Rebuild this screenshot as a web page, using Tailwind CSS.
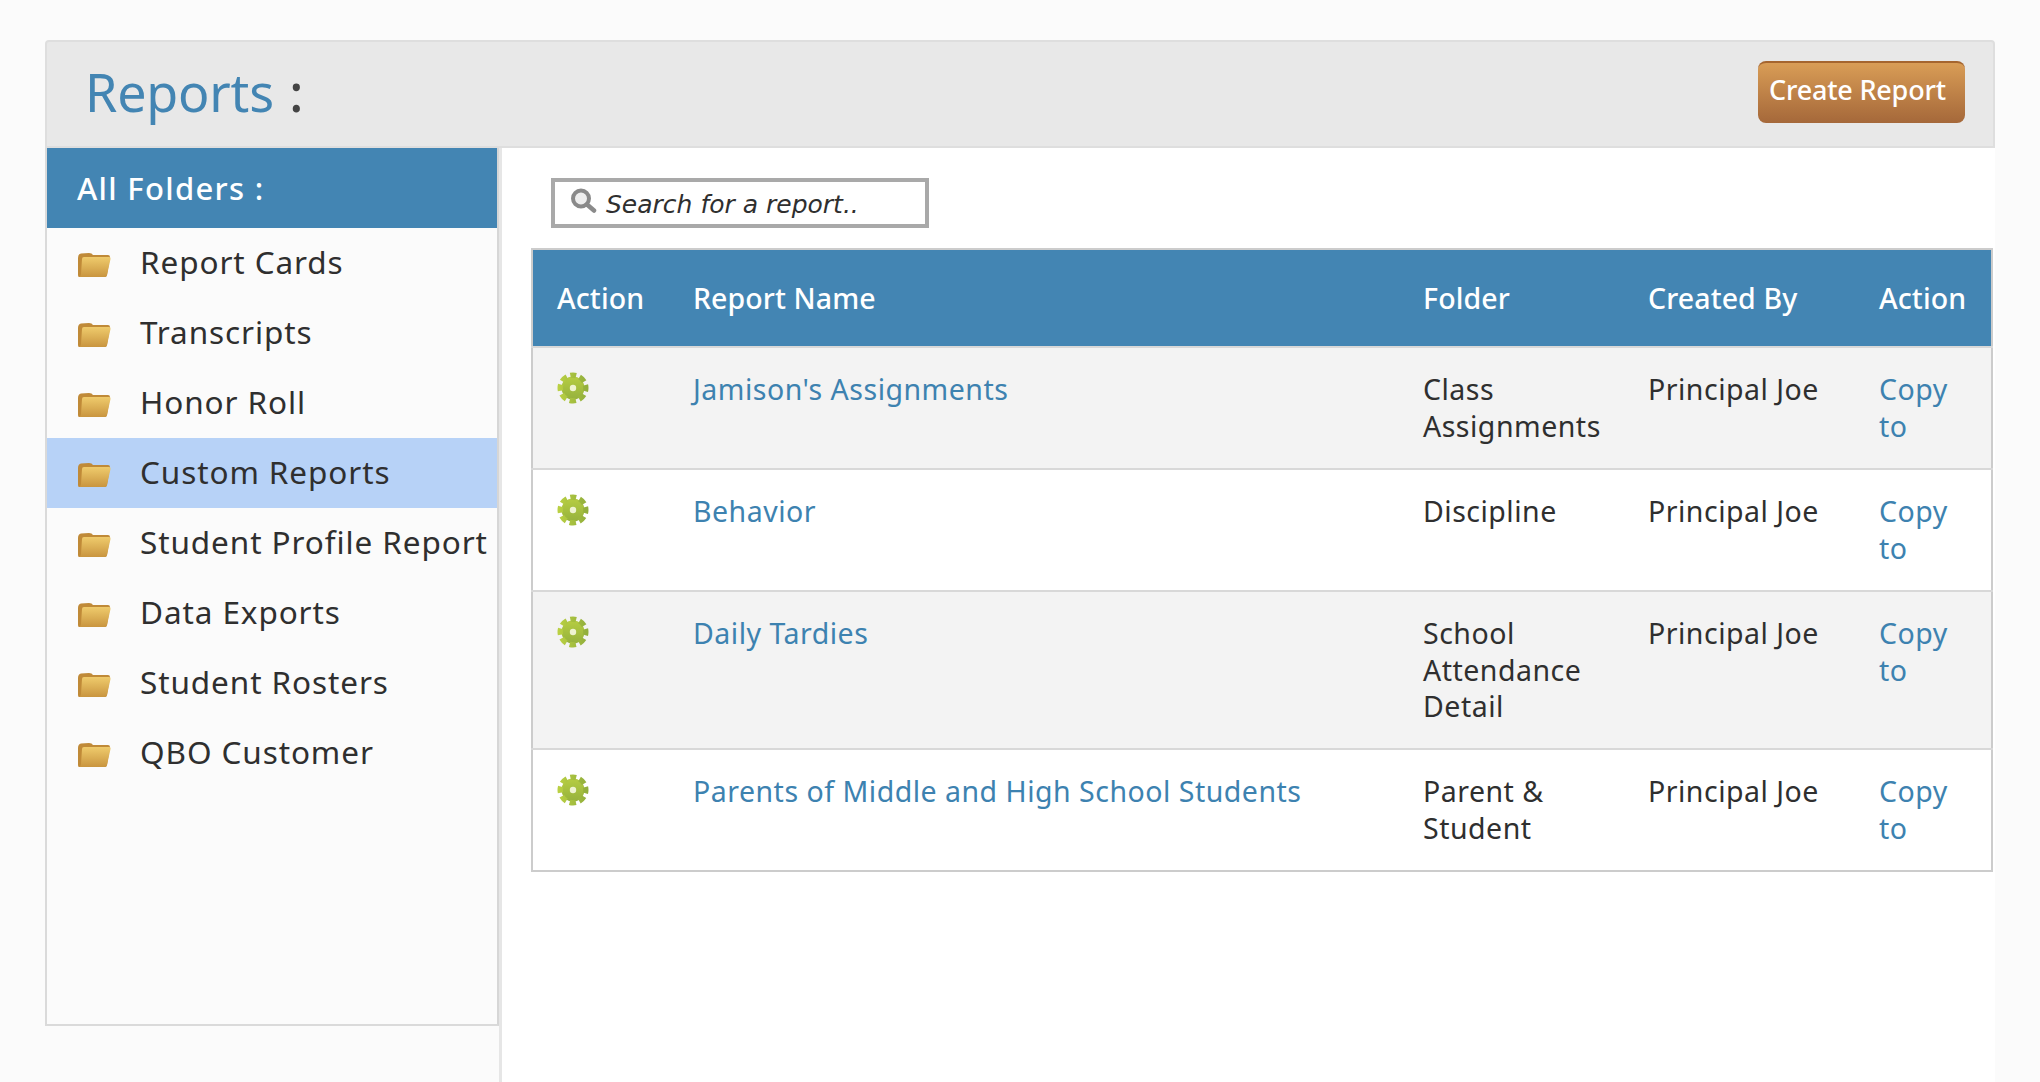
<!DOCTYPE html>
<html><head><meta charset="utf-8"><script src="https://cdn.jsdelivr.net/npm/@tailwindcss/browser@4"></script></head>
<body class="bg-[#fbfbfb] h-[1082px] overflow-hidden font-['Noto_Sans',sans-serif] text-[#2f2f2f]">
<svg class="absolute w-0 h-0"><defs>
<linearGradient id="fg" x1="0" y1="0" x2="0" y2="1"><stop offset="0" stop-color="#efcb6c"/><stop offset="1" stop-color="#c9953f"/></linearGradient>
<linearGradient id="gg" gradientUnits="userSpaceOnUse" x1="0" y1="0" x2="0" y2="32"><stop offset="0" stop-color="#bcd243"/><stop offset="1" stop-color="#8fac3c"/></linearGradient>
<symbol id="folder" viewBox="0 0 34 26"><path d="M1 6Q1 2 4 1.500L12 1Q15 1 16 3L31 3Q33 3 33 5L30 23Q29.500 25 28 25L2 25Q1 25 1 23Z" fill="#c08a38"/><path d="M5 7Q5 5 7 5L32 5Q34 5 33.500 7L30 23Q29.500 25 28 25L2 25Q4 24 4 22Z" fill="url(#fg)"/></symbol>
<symbol id="gear" viewBox="0 0 32 32"><circle cx="16" cy="16" r="11.500" fill="url(#gg)"/><circle cx="16" cy="16" r="12.800" fill="none" stroke="url(#gg)" stroke-width="5.400" stroke-dasharray="6.400 3.650" stroke-dashoffset="3.200" transform="rotate(-90 16 16)"/><circle cx="16" cy="16" r="3.200" fill="#eef3d0"/></symbol>
</defs></svg>
<div class="ml-[45px] pt-[40px] w-[1950px] h-[1082px] flex flex-col">
  <header class="h-[108px] shrink-0 bg-[#e8e8e8] border-2 border-[#dedede] rounded-t-[4px] flex items-center justify-between pl-[38px] pr-[28px]">
    <h1 class="text-[52px] tracking-[-0.2px] leading-none text-[#4385b3] mb-[4px]">Reports <span class="text-[#444] font-medium ml-[2px]">:</span></h1>
    <button class="w-[207px] h-[62px] mb-[5px] rounded-[8px] border-t-2 border-[#a5652f] bg-gradient-to-b from-[#d99d56] to-[#a5683a] text-white font-medium text-[27px] tracking-[-0.2px] text-left pl-[11px] leading-none pb-[6px]">Create Report</button>
  </header>
  <div class="flex flex-1 min-h-0">
    <aside class="w-[454px] shrink-0 self-start h-[878px] border-2 border-t-0 border-[#dadada] border-r-[#d6d6d6] bg-[#fbfbfb]">
      <div class="h-[80px] bg-[#4385b3] text-white text-[31px] font-medium tracking-[1.300px] leading-[80px] pl-[30px]">All Folders :</div>
      <ul class="text-[31.500px] text-[#2f2f2f] tracking-[0.9px]">
        <li class="h-[70px] flex items-center pl-[30px] gap-[29px]"><svg class="w-[34px] h-[26px] mt-[4px] shrink-0"><use href="#folder"/></svg><span class="mb-[2px]">Report Cards</span></li>
        <li class="h-[70px] flex items-center pl-[30px] gap-[29px]"><svg class="w-[34px] h-[26px] mt-[4px] shrink-0"><use href="#folder"/></svg><span class="mb-[2px]">Transcripts</span></li>
        <li class="h-[70px] flex items-center pl-[30px] gap-[29px]"><svg class="w-[34px] h-[26px] mt-[4px] shrink-0"><use href="#folder"/></svg><span class="mb-[2px]">Honor Roll</span></li>
        <li class="h-[70px] flex items-center pl-[30px] gap-[29px] bg-[#b7d2f7]"><svg class="w-[34px] h-[26px] mt-[4px] shrink-0"><use href="#folder"/></svg><span class="mb-[2px]">Custom Reports</span></li>
        <li class="h-[70px] flex items-center pl-[30px] gap-[29px] whitespace-nowrap"><svg class="w-[34px] h-[26px] mt-[4px] shrink-0"><use href="#folder"/></svg><span class="mb-[2px]">Student Profile Report</span></li>
        <li class="h-[70px] flex items-center pl-[30px] gap-[29px]"><svg class="w-[34px] h-[26px] mt-[4px] shrink-0"><use href="#folder"/></svg><span class="mb-[2px]">Data Exports</span></li>
        <li class="h-[70px] flex items-center pl-[30px] gap-[29px]"><svg class="w-[34px] h-[26px] mt-[4px] shrink-0"><use href="#folder"/></svg><span class="mb-[2px]">Student Rosters</span></li>
        <li class="h-[70px] flex items-center pl-[30px] gap-[29px]"><svg class="w-[34px] h-[26px] mt-[4px] shrink-0"><use href="#folder"/></svg><span class="mb-[2px]">QBO Customer</span></li>
      </ul>
    </aside>
    <main class="flex-1 bg-white border-l-[3px] border-[#e6e6e6] ml-0 pt-[30px] pl-[29px] pr-[2px]">
      <div class="ml-[20px] w-[378px] h-[50px] border-[4px] border-[#a9a9a9] flex items-center pl-[14px] gap-[9px]">
        <svg class="w-[28px] h-[28px] shrink-0 mb-[4px] blur-[0.5px]" viewBox="0 0 28 28"><circle cx="12" cy="11.500" r="8" fill="#eeeeee" stroke="#8a8a8a" stroke-width="4"/><path d="M18 17.500l7 6" stroke="#8a8a8a" stroke-width="4.500" stroke-linecap="round"/></svg>
        <span class="italic text-[25px] font-['DejaVu_Sans',sans-serif] text-[#2f2f2f] leading-none mt-[3px]">Search for a report..</span>
      </div>
      <table class="mt-[20px] w-[1460px] table-fixed border-collapse border-2 border-[#cccccc] text-[28.500px] leading-[36.500px] tracking-[0.5px]">
        <colgroup><col class="w-[136px]"><col class="w-[730px]"><col class="w-[226px]"><col class="w-[230px]"><col class="w-[138px]"></colgroup>
        <thead><tr class="bg-[#4385b3] text-white h-[98px] text-left tracking-[0.1px]">
          <th class="font-medium pl-[24px]">Action</th><th class="font-medium pl-[25px]">Report Name</th><th class="font-medium pl-[25px]">Folder</th><th class="font-medium pl-[24px]">Created By</th><th class="font-medium pl-[25px]">Action</th>
        </tr></thead>
        <tbody class="align-top">
          <tr class="bg-[#f3f3f3] border-t-2 border-[#d8d8d8] h-[122px]">
            <td class="pl-[24px] pt-[24px]"><svg class="w-[32px] h-[32px] blur-[0.4px]"><use href="#gear"/></svg></td>
            <td class="pl-[25px] pt-[23px] text-[#3d82b0]">Jamison's Assignments</td>
            <td class="pl-[25px] pt-[23px]">Class Assignments</td>
            <td class="pl-[24px] pt-[23px]">Principal Joe</td>
            <td class="pl-[25px] pr-[24px] pt-[23px] text-[#3d82b0]">Copy to</td>
          </tr>
          <tr class="bg-white border-t-2 border-[#d8d8d8] h-[122px]">
            <td class="pl-[24px] pt-[24px]"><svg class="w-[32px] h-[32px] blur-[0.4px]"><use href="#gear"/></svg></td>
            <td class="pl-[25px] pt-[23px] text-[#3d82b0]">Behavior</td>
            <td class="pl-[25px] pt-[23px]">Discipline</td>
            <td class="pl-[24px] pt-[23px]">Principal Joe</td>
            <td class="pl-[25px] pr-[24px] pt-[23px] text-[#3d82b0]">Copy to</td>
          </tr>
          <tr class="bg-[#f3f3f3] border-t-2 border-[#d8d8d8] h-[158px]">
            <td class="pl-[24px] pt-[24px]"><svg class="w-[32px] h-[32px] blur-[0.4px]"><use href="#gear"/></svg></td>
            <td class="pl-[25px] pt-[23px] text-[#3d82b0]">Daily Tardies</td>
            <td class="pl-[25px] pt-[23px]">School Attendance Detail</td>
            <td class="pl-[24px] pt-[23px]">Principal Joe</td>
            <td class="pl-[25px] pr-[24px] pt-[23px] text-[#3d82b0]">Copy to</td>
          </tr>
          <tr class="bg-white border-t-2 border-[#d8d8d8] h-[122px]">
            <td class="pl-[24px] pt-[24px]"><svg class="w-[32px] h-[32px] blur-[0.4px]"><use href="#gear"/></svg></td>
            <td class="pl-[25px] pt-[23px] text-[#3d82b0]">Parents of Middle and High School Students</td>
            <td class="pl-[25px] pt-[23px]">Parent &amp; Student</td>
            <td class="pl-[24px] pt-[23px]">Principal Joe</td>
            <td class="pl-[25px] pr-[24px] pt-[23px] text-[#3d82b0]">Copy to</td>
          </tr>
        </tbody>
      </table>
    </main>
  </div>
</div>
</body></html>
